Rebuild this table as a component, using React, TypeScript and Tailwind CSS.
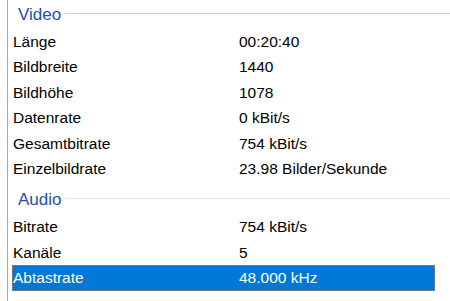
import React from 'react';

interface Prop {
  name: string;
  value: string;
  selected?: boolean;
}

interface Group {
  title: string;
  items: Prop[];
}

// Eigenschaften der Mediendatei
const groups: Group[] = [
  {
    title: 'Video',
    items: [
      { name: 'Länge', value: '00:20:40' },
      { name: 'Bildbreite', value: '1440' },
      { name: 'Bildhöhe', value: '1078' },
      { name: 'Datenrate', value: '0 kBit/s' },
      { name: 'Gesamtbitrate', value: '754 kBit/s' },
      { name: 'Einzelbildrate', value: '23.98 Bilder/Sekunde' },
    ],
  },
  {
    title: 'Audio',
    items: [
      { name: 'Bitrate', value: '754 kBit/s' },
      { name: 'Kanäle', value: '5' },
      { name: 'Abtastrate', value: '48.000 kHz', selected: true },
    ],
  },
];

function GroupHeader({ title, first }: { title: string; first: boolean }) {
  return (
    <div className={`flex items-center h-[29px] pl-[6px] ${first ? '' : 'mt-[4px]'}`}>
      <span className="text-[17px] leading-none text-[#1f4fb0] pb-[1px]">{title}</span>
      <div className={`flex-1 h-px ml-[4px] mt-[-2px] ${first ? 'bg-[#c3cce6]' : 'bg-[#e3e7f1]'}`} />
    </div>
  );
}

function Row({ item }: { item: Prop }) {
  return (
    <div
      className={`flex items-center h-[25.4px] text-[15.5px] mr-[15px] ${
        item.selected
          ? 'bg-[#0078d7] text-white outline-1 outline-dotted outline-[#8a8a8a] -outline-offset-1'
          : 'text-black'
      }`}
    >
      <span className="w-[227px] pl-[1px] truncate">{item.name}</span>
      <span className="flex-1 truncate">{item.value}</span>
    </div>
  );
}

export default function App() {
  return (
    <div
      className="w-[450px] h-[301px] bg-white overflow-hidden pl-[7px]"
      style={{ fontFamily: '"Liberation Sans", Arial, sans-serif' }}
    >
      <div className="h-full border-l border-[#a8a8a8] pl-[4px]">
        {groups.map((g, i) => (
          <div key={g.title}>
            <GroupHeader title={g.title} first={i === 0} />
            {g.items.map((item) => (
              <Row key={item.name} item={item} />
            ))}
          </div>
        ))}
      </div>
    </div>
  );
}
